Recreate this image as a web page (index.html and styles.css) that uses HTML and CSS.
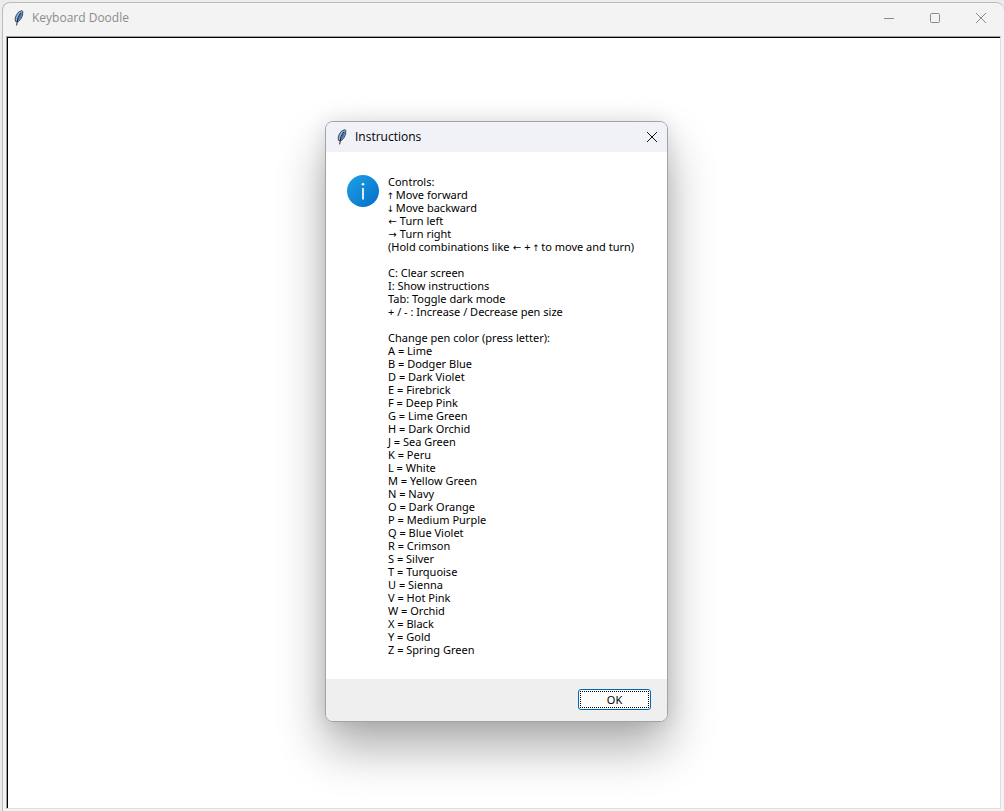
FILE: index.html
```html
<!DOCTYPE html>
<html lang="en">
<head>
<meta charset="utf-8">
<title>Keyboard Doodle</title>
<link rel="stylesheet" href="styles.css">
</head>
<body>
<svg width="0" height="0" class="defs" aria-hidden="true">
  <symbol id="feather" viewBox="0 0 10 16">
    <path d="M1.4 11.3 1.2 8 2.4 5 4.7 2 7.8.6 8.8 1.4 8.6 5 7.2 8.4 5 11 3 12Z" fill="#8fb2dc" stroke="#1c2c48" stroke-width=".8"/>
    <path d="M8 2 7.9 5 6.8 8 4.8 10.3 3.2 11.4 4.8 7Z" fill="#5478ac"/>
    <path d="M6.8 2.8 4 7.6 2.6 15.4" fill="none" stroke="#0b1322" stroke-width=".9"/>
  </symbol>
</svg>
<div class="window">
  <header class="titlebar">
    <svg class="feather" aria-hidden="true"><use href="#feather"/></svg>
    <h1 class="title">Keyboard Doodle</h1>
    <div class="controls">
      <button class="control" aria-label="Minimize"><svg viewBox="0 0 12 12"><path d="M1 6.5h10"/></svg></button>
      <button class="control" aria-label="Maximize"><svg viewBox="0 0 12 12"><rect x="1.5" y="1.5" width="9" height="9" rx="1"/></svg></button>
      <button class="control" aria-label="Close"><svg viewBox="0 0 12 12"><path d="M1 1l10 10M11 1 1 11"/></svg></button>
    </div>
  </header>
  <main class="canvas"></main>
</div>
<section class="dialog" role="dialog" aria-labelledby="dialog-title">
  <header class="dialog-bar">
    <svg class="feather" aria-hidden="true"><use href="#feather"/></svg>
    <h2 class="title" id="dialog-title">Instructions</h2>
    <button class="dialog-close" aria-label="Close"><svg viewBox="0 0 12 12"><path d="M1 1l10 10M11 1 1 11"/></svg></button>
  </header>
  <div class="dialog-body">
    <svg class="info" viewBox="0 0 32 32" aria-hidden="true">
      <defs><linearGradient id="blue" x1="0" y1="0" x2="1" y2="1"><stop offset="0.1" stop-color="#1d9de2"/><stop offset="0.9" stop-color="#0672cc"/></linearGradient></defs>
      <circle cx="16" cy="16" r="16" fill="url(#blue)"/>
      <circle cx="16" cy="9.3" r="1.3" fill="#fff"/>
      <path d="M16 13v11.5" stroke="#fff" stroke-width="1.7"/>
    </svg>
    <div class="message">
      <p>Controls:<br>
      <span class="arrow upright">↑</span> Move forward<br>
      <span class="arrow upright">↓</span> Move backward<br>
      <span class="arrow">←</span> Turn left<br>
      <span class="arrow">→</span> Turn right<br>
      (Hold combinations like <span class="arrow">←</span> + <span class="arrow upright">↑</span> to move and turn)</p>
      <p>C: Clear screen<br>
      I: Show instructions<br>
      Tab: Toggle dark mode<br>
      + / - : Increase / Decrease pen size</p>
      <p>Change pen color (press letter):<br>
      A = Lime<br>
      B = Dodger Blue<br>
      D = Dark Violet<br>
      E = Firebrick<br>
      F = Deep Pink<br>
      G = Lime Green<br>
      H = Dark Orchid<br>
      J = Sea Green<br>
      K = Peru<br>
      L = White<br>
      M = Yellow Green<br>
      N = Navy<br>
      O = Dark Orange<br>
      P = Medium Purple<br>
      Q = Blue Violet<br>
      R = Crimson<br>
      S = Silver<br>
      T = Turquoise<br>
      U = Sienna<br>
      V = Hot Pink<br>
      W = Orchid<br>
      X = Black<br>
      Y = Gold<br>
      Z = Spring Green</p>
    </div>
  </div>
  <footer class="dialog-footer"><button class="ok"><span class="ok-focus">OK</span></button></footer>
</section>
</body>
</html>
```
FILE: styles.css
```css
* { box-sizing: border-box; }
body {
  margin: 0;
  min-height: 100vh;
  display: flex;
  padding: 2px 0 0 2px;
  background: #ececec;
  font-family: "Noto Sans", "Open Sans", sans-serif;
  overflow: hidden;
}
.defs { position: absolute; }
h1, h2, p { margin: 0; }
button { padding: 0; border: 0; background: none; font: inherit; color: inherit; }
.window {
  flex: 1;
  display: flex;
  flex-direction: column;
  padding: 0 3px 2px;
  border: 1px solid #bcbcbc;
  border-width: 1px 0 0 1px;
  border-radius: 8px 8px 0 0;
  background: #f3f3f3;
}
.titlebar {
  height: 33px;
  display: flex;
  align-items: center;
  padding: 0 0 4px 8px;
}
.feather { width: 10px; height: 16px; margin-right: 8px; flex: none; }
.title { font: 400 12px/16px "Open Sans", "Noto Sans", sans-serif; }
.titlebar .title { color: #8c8c8c; }
.controls { display: flex; margin: 0 -3px 0 auto; }
.control { width: 46px; height: 28px; display: grid; place-items: center; }
.control svg, .dialog-close svg { width: 12px; height: 12px; fill: none; stroke: #8a8a8a; stroke-width: 1; }
.canvas {
  flex: 1;
  background: #fff;
  border: 1px solid #dedede;
  border-top-color: #a0a0a0;
  border-left-color: #a0a0a0;
  box-shadow: inset 1px 1px #000;
}
.dialog {
  position: absolute;
  left: 325px;
  top: 121px;
  width: 343px;
  border: 1px solid #a3a3a3;
  border-radius: 8px;
  background: #fff;
  box-shadow: 0 26px 48px rgba(0, 0, 0, 0.32), 0 0 20px rgba(0, 0, 0, 0.1);
  overflow: hidden;
}
.dialog-bar {
  height: 30px;
  display: flex;
  align-items: center;
  padding: 0 9px 1px 11px;
  background: #f0f2f7;
}
.dialog-close { width: 12px; height: 12px; margin-left: auto; display: grid; }
.dialog-close svg { stroke: #111; }
.dialog-body { display: flex; gap: 9px; padding: 23px 21px 23px; }
.info { width: 32px; height: 32px; flex: none; }
.message { display: grid; gap: 13px; font-size: 11px; line-height: 13px; white-space: nowrap; }
.arrow {
  display: inline-flex;
  justify-content: center;
  width: 9px;
  font: 10px/6px "DejaVu Sans", sans-serif;
}
.upright { width: 5px; font-size: 9px; }
.dialog-footer { height: 42px; padding: 10px 16px; display: flex; justify-content: flex-end; background: #efefef; }
.ok {
  width: 73px;
  height: 21px;
  display: grid;
  padding: 1px;
  border: 1px solid #0067b5;
  border-radius: 3px;
  background: #fdfdfd;
  font-size: 11px;
  line-height: 15px;
}
.ok-focus { border: 1px dotted #000; }
```
